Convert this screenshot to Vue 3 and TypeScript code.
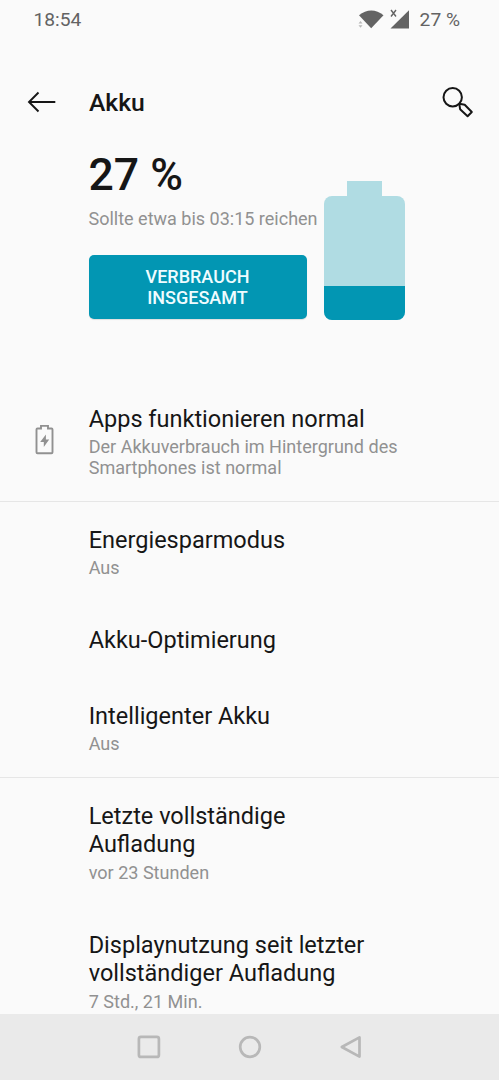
<script setup lang="ts">
interface Entry {
  lines: string[]
  summary?: string[]
  height: number
  icon?: boolean
  divider?: boolean
}

const level = 27

const entries: Entry[] = [
  {
    lines: ['Apps funktionieren normal'],
    summary: ['Der Akkuverbrauch im Hintergrund des', 'Smartphones ist normal'],
    height: 121,
    icon: true,
    divider: true,
  },
  { lines: ['Energiesparmodus'], summary: ['Aus'], height: 100 },
  { lines: ['Akku-Optimierung'], height: 76 },
  { lines: ['Intelligenter Akku'], summary: ['Aus'], height: 100, divider: true },
  { lines: ['Letzte vollständige', 'Aufladung'], summary: ['vor 23 Stunden'], height: 129 },
  { lines: ['Displaynutzung seit letzter', 'vollständiger Aufladung'], summary: ['7 Std., 21 Min.'], height: 129 },
]
</script>

<template>
  <div class="screen">
    <div class="status">
      <span>18:54</span>
      <div class="status-right">
        <svg class="signals" width="54" height="24" viewBox="0 0 54 24">
          <path d="M3 6.300C10.400.1 20-.1 27.500 6.300L15.200 19.300Z" fill="#636363" />
          <path d="M2.500 14.500l2-2.500 2 2.500zM2.500 16.300l2 2.500 2-2.500z" fill="#b8b8b8" />
          <path d="M35 1l5 6.500M40 1l-5 6.500" stroke="#636363" stroke-width="1.400" fill="none" />
          <path d="M53 1.300V19.500H34.500Z" fill="#636363" />
        </svg>
        <span>{{ level }} %</span>
      </div>
    </div>

    <header class="toolbar">
      <svg class="back" width="30" height="24" viewBox="0 0 30 24">
        <path d="M28.300 12H2M11.500 2.500L2 12l9.500 9.500" fill="none" stroke="#161616" stroke-width="1.900" />
      </svg>
      <h1>Akku</h1>
      <svg class="search" width="34" height="34" viewBox="0 0 34 34">
        <circle cx="12.700" cy="12.200" r="9.200" fill="none" stroke="#161616" stroke-width="2" />
        <path d="M19.300 18.800L20.100 24.200L27.600 31.200L31.800 27L24.700 19.700Z" fill="none" stroke="#161616" stroke-width="2" stroke-linejoin="round" />
      </svg>
    </header>

    <section class="hero">
      <div class="hero-info">
        <div class="percent">{{ level }} %</div>
        <div class="estimate">Sollte etwa bis 03:15 reichen</div>
        <button class="usage">VERBRAUCH<br />INSGESAMT</button>
      </div>
      <div class="battery">
        <div class="battery-cap"></div>
        <div class="battery-body">
          <div class="battery-fill" :style="{ height: level + '%' }"></div>
        </div>
      </div>
    </section>

    <main class="list">
      <div
        v-for="entry in entries"
        :key="entry.lines[0]"
        class="row"
        :class="{ divided: entry.divider, double: entry.lines.length > 1 }"
        :style="{ height: entry.height + 'px' }"
      >
        <div class="row-icon">
          <svg v-if="entry.icon" width="22" height="32" viewBox="0 0 22 32">
            <path d="M3.500 4.500H7V1.900h7v2.600h3.500q1 0 1 1V28.200q0 1-1 1H3.500q-1 0-1-1V5.500q0-1 1-1Z" fill="none" stroke="#919191" stroke-width="1.900" />
            <path d="M11.900 10.500L6.200 18h3.600v5L15.200 15.500h-3.300Z" fill="#919191" />
          </svg>
        </div>
        <div>
          <div class="title"><div v-for="line in entry.lines" :key="line">{{ line }}</div></div>
          <div v-if="entry.summary" class="summary">
            <div v-for="line in entry.summary" :key="line">{{ line }}</div>
          </div>
        </div>
      </div>
    </main>

    <nav class="navbar">
      <svg width="24" height="24" viewBox="0 0 24 24">
        <rect x="1.900" y="1.900" width="20" height="20" rx="2" />
      </svg>
      <svg width="24" height="24" viewBox="0 0 24 24">
        <circle cx="12" cy="12" r="9.800" />
      </svg>
      <svg width="24" height="24" viewBox="0 0 24 24">
        <path d="M20.500 2.400V21.600L2.800 12Z" />
      </svg>
    </nav>
  </div>
</template>

<style>
body {
  margin: 0;
  background: #fafafa;
}
</style>

<style scoped>
.screen {
  display: flex;
  flex-direction: column;
  box-sizing: border-box;
  width: 499px;
  height: 1080px;
  overflow: hidden;
  background: #fafafa;
  color: #161616;
  font-family: Roboto, "Liberation Sans", sans-serif;
}

.status {
  display: flex;
  flex: none;
  justify-content: space-between;
  height: 38px;
  padding: 9px 39px 0 33.500px;
  box-sizing: border-box;
  color: #636363;
  font-size: 19.200px;
  line-height: 22px;
}

.status-right {
  display: flex;
  gap: 10px;
}

.signals {
  flex: none;
}

.toolbar {
  display: flex;
  flex: none;
  align-items: center;
  box-sizing: border-box;
  padding: 0 25px 0 27px;
  height: 128px;
}

.back {
  flex: none;
}

.toolbar h1 {
  flex: 1;
  margin: 2px 0 0 32px;
  font-size: 24.700px;
  font-weight: 500;
  line-height: 28px;
}

.search {
  flex: none;
}

.hero {
  display: flex;
  flex: none;
  height: 215px;
  padding-left: 88.500px;
}

.hero-info {
  flex: none;
  width: 235.500px;
  margin-top: -17px;
}

.percent {
  font-size: 44.500px;
  font-weight: 500;
  line-height: 52px;
}

.estimate {
  margin-top: 7px;
  color: #919191;
  font-size: 18px;
  line-height: 21px;
  white-space: nowrap;
}

.usage {
  display: block;
  width: 218px;
  height: 64px;
  margin: 25.500px 0 0 0;
  padding: 0;
  border: 0;
  border-radius: 5px;
  background: #0296b3;
  box-shadow: 0 1px 1px #0000001c;
  color: #effcff;
  font-family: inherit;
  font-size: 18px;
  font-weight: 500;
  line-height: 21px;
}

.battery {
  display: flex;
  flex-direction: column;
  align-items: center;
  width: 81px;
  height: 138.500px;
  margin-top: 15px;
}

.battery-cap {
  width: 35px;
  height: 15px;
  background: #b0dce3;
}

.battery-body {
  display: flex;
  flex: 1;
  align-items: flex-end;
  width: 100%;
  border-radius: 8px;
  background: #b0dce3;
  overflow: hidden;
}

.battery-fill {
  width: 100%;
  background: #0296b3;
}

.list {
  flex: 1;
  min-height: 0;
  overflow: hidden;
}

.row {
  display: flex;
  box-sizing: border-box;
  padding-top: 24px;
}

.row.divided {
  border-bottom: 1px solid #e6e6e6;
}

.row-icon {
  display: flex;
  flex: none;
  width: 55.200px;
  padding: 19px 0 0 33.500px;
}

.title {
  font-size: 23.500px;
  line-height: 28px;
}

.summary {
  margin-top: 3px;
  color: #919191;
  font-size: 18.050px;
  line-height: 21px;
}

.double .summary {
  margin-top: 4px;
}

.navbar {
  display: flex;
  flex: none;
  align-items: center;
  justify-content: center;
  gap: 77px;
  height: 66px;
  background: #eaeaea;
}

.navbar svg {
  fill: none;
  stroke: #b8b8b8;
  stroke-width: 2.700;
  stroke-linejoin: round;
}
</style>
